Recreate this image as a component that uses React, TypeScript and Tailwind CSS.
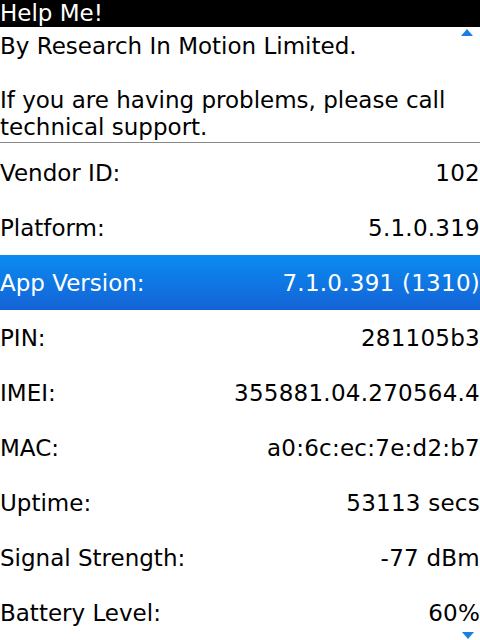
import React from "react";

const rows: [string, string][] = [
  ["Vendor ID:", "102"],
  ["Platform:", "5.1.0.319"],
  ["App Version:", "7.1.0.391 (1310)"],
  ["PIN:", "281105b3"],
  ["IMEI:", "355881.04.270564.4"],
  ["MAC:", "a0:6c:ec:7e:d2:b7"],
  ["Uptime:", "53113 secs"],
  ["Signal Strength:", "-77 dBm"],
  ["Battery Level:", "60%"],
];

export default function App() {
  return (
    <div
      className="relative w-[480px] h-[640px] overflow-hidden bg-white text-black text-[23px]"
      style={{ fontFamily: '"DejaVu Sans", Verdana, sans-serif' }}
    >
      <div className="relative z-10 h-[27px] bg-black text-white leading-[27px] pl-0">
        Help Me!
      </div>
      <div className="h-[115px] overflow-hidden">
        <div className="pt-[6px] leading-[27px]">
          <div>By Research In Motion Limited.</div>
          <div>&nbsp;</div>
          <div>If you are having problems, please call</div>
          <div>technical support.</div>
        </div>
      </div>
      <div className="h-[1px] bg-[#8a8a8a]" />
      <div className="h-[2px]" />
      {rows.map(([k, v], i) => (
        <div
          key={k}
          className={
            i === 2
              ? "h-[55px] flex items-center justify-between pt-[2px] bg-gradient-to-b from-[#0a8cf0] to-[#1462d6] text-white"
              : "h-[55px] flex items-center justify-between pt-[2px]"
          }
        >
          <span>{k}</span>
          <span className="tracking-[0.25px]">{v}</span>
        </div>
      ))}
      <svg
        className="absolute left-[461px] top-[29px]"
        width="12"
        height="7"
        viewBox="0 0 12 7"
      >
        <polygon points="6,0 12,7 0,7" fill="#1a7fe0" />
      </svg>
      <svg
        className="absolute left-[462px] top-[632px]"
        width="12"
        height="7"
        viewBox="0 0 12 7"
      >
        <polygon points="0,0 12,0 6,7" fill="#1a7fe0" />
      </svg>
    </div>
  );
}
